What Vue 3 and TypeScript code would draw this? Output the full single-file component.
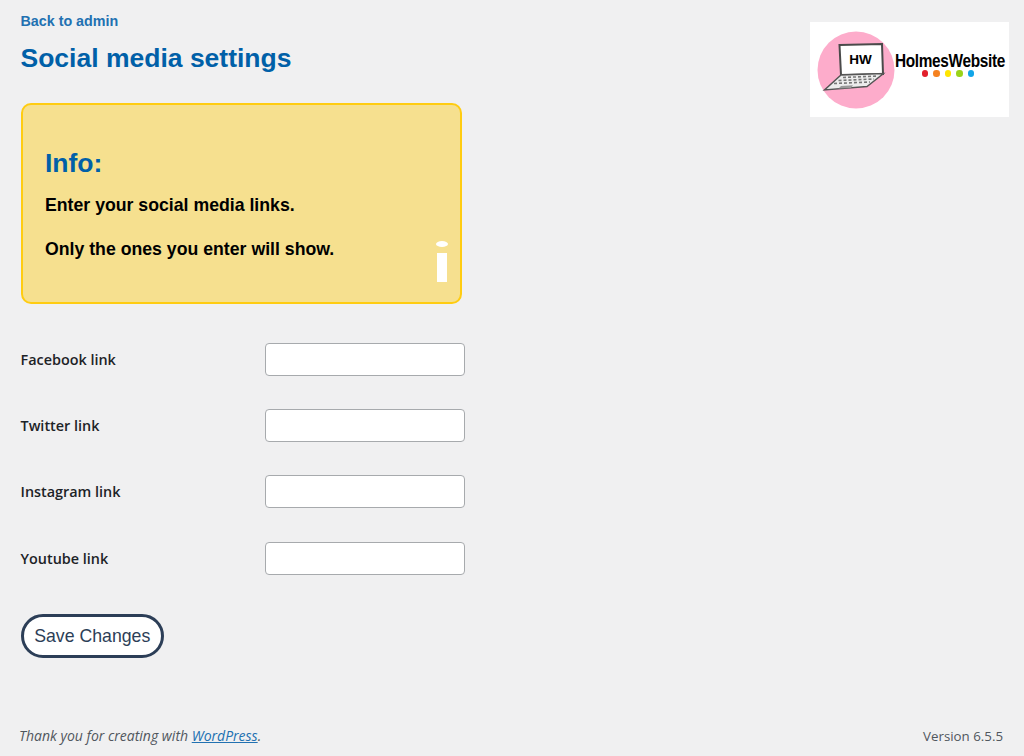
<script setup lang="ts">
const fields = ['Facebook link', 'Twitter link', 'Instagram link', 'Youtube link']
const dots = ['#e2202c', '#f58220', '#ffe500', '#9ad318', '#12a5e8']
</script>

<template>
  <div class="page">
    <div class="logo">
      <svg class="logo__art" width="80" height="80" viewBox="0 0 80 80">
        <circle cx="40" cy="40" r="38.5" fill="#fdaccb" />
        <path d="M23.5 15 L66 14 L67 44 L25 45 Z" fill="#fff" stroke="#4a4a4a" stroke-width="2" />
        <path d="M25 45 L67.5 43.5 L51 56.5 L8.5 60 Z" fill="#ececec" stroke="#555" stroke-width="1.4" />
        <path d="M27 47.5 L62 46 M22.5 50.5 L58 49 M18 53.5 L54 52" stroke="#777" stroke-width="1.6" stroke-dasharray="3 2" fill="none" />
        <path d="M25 56 L37 55.2 L35 58 L22.5 58.6 Z" fill="#999" />
        <text x="44.5" y="33.5" class="logo__hw" text-anchor="middle">HW</text>
      </svg>
      <div class="logo__brand">
        <span class="logo__name">HolmesWebsite</span>
        <div class="logo__dots">
          <i v-for="d in dots" :key="d" :style="{ background: d }" />
        </div>
      </div>
    </div>

    <main class="main">
      <a class="back" href="#">Back to admin</a>
      <h1 class="title">Social media settings</h1>

      <section class="info">
        <h2 class="info__title">Info:</h2>
        <p>Enter your social media links.</p>
        <p>Only the ones you enter will show.</p>
        <div class="info__mark"><b /><span /></div>
      </section>

      <form class="form" @submit.prevent>
        <label v-for="f in fields" :key="f" class="row">
          <span class="row__label">{{ f }}</span>
          <input class="row__input" type="text" />
        </label>
        <button class="save" type="submit">Save Changes</button>
      </form>
    </main>

    <footer class="footer">
      <em>Thank you for creating with <a href="#">WordPress</a>.</em>
      <span class="footer__version">Version 6.5.5</span>
    </footer>
  </div>
</template>

<style>
body {
  background: #f0f0f1;
}
</style>

<style scoped>
.page {
  position: relative;
  height: 756px;
  display: flex;
  flex-direction: column;
  background: #f0f0f1;
  font-family: "Liberation Sans", Arial, sans-serif;
  overflow: hidden;
}

.main {
  flex: 1;
  padding: 13px 0 0 20.5px;
}

.back {
  display: block;
  font-size: 14.3px;
  line-height: 16px;
  font-weight: 700;
  color: #2271b1;
  text-decoration: none;
}

.title {
  margin: 14px 0 0;
  font-size: 26.5px;
  line-height: 30px;
  font-weight: 700;
  color: #0060a8;
}

.info {
  position: relative;
  box-sizing: border-box;
  width: 441.5px;
  height: 201px;
  margin-top: 30px;
  padding: 43px 22.5px 0;
  background: #f6e08f;
  border: 2px solid #ffcc11;
  border-radius: 10px;
  color: #000;
}

.info__title {
  margin: 0 0 17px;
  font-size: 26.5px;
  line-height: 30px;
  font-weight: 700;
  color: #0060a8;
}

.info p {
  margin: 0 0 24px;
  font-size: 17.7px;
  line-height: 20px;
  font-weight: 700;
}

.info__mark {
  position: absolute;
  right: 12px;
  bottom: 20px;
  width: 12px;
  display: flex;
  flex-direction: column;
  align-items: center;
  gap: 6px;
}

.info__mark b {
  width: 12px;
  height: 6px;
  border-radius: 50%;
  background: #fff;
}

.info__mark span {
  width: 10px;
  height: 29px;
  background: #fff;
}

.form {
  display: flex;
  flex-direction: column;
  margin-top: 38.7px;
}

.row {
  display: flex;
  align-items: center;
  height: 33px;
  margin-bottom: 33.33px;
}

.row__label {
  width: 244.5px;
  font-family: "Open Sans", "Noto Sans", sans-serif;
  font-size: 14.4px;
  font-weight: 600;
  color: #1d2327;
}

.row__input {
  box-sizing: border-box;
  width: 200px;
  height: 33px;
  background: #fff;
  border: 1px solid #a7aaad;
  border-radius: 4px;
}

.save {
  align-self: flex-start;
  box-sizing: border-box;
  width: 143.5px;
  height: 44px;
  margin-top: 6.3px;
  padding: 0;
  background: #fff;
  border: 3px solid #2c3e57;
  border-radius: 22px;
  font-family: inherit;
  font-size: 17.7px;
  color: #2c3e57;
}

.footer {
  display: flex;
  justify-content: space-between;
  padding: 0 21px 11px 19px;
  font-family: "Open Sans", "Noto Sans", sans-serif;
  font-size: 14px;
  line-height: 18px;
  color: #50575e;
}

.footer__version {
  font-size: 13.3px;
}

.footer a {
  color: #2271b1;
}

.logo {
  position: absolute;
  left: 810px;
  top: 22px;
  width: 199px;
  height: 95px;
  display: flex;
  align-items: center;
  background: #fff;
  overflow: hidden;
}

.logo__art {
  flex: none;
  margin-left: 5.5px;
}

.logo__hw {
  font-family: "Liberation Sans", sans-serif;
  font-size: 13.5px;
  font-weight: 700;
  fill: #000;
}

.logo__brand {
  margin-left: -14px;
  margin-bottom: 11px;
  display: flex;
  flex-direction: column;
  align-items: center;
}

.logo__name {
  font-family: "Liberation Sans", sans-serif;
  font-size: 19px;
  line-height: 20px;
  font-weight: 700;
  letter-spacing: -0.4px;
  color: #000;
  transform: scaleX(0.81);
}

.logo__dots {
  display: flex;
  gap: 5px;
  margin: -1px 3px 0 0;
}

.logo__dots i {
  width: 6.5px;
  height: 6.5px;
  border-radius: 50%;
}
</style>
